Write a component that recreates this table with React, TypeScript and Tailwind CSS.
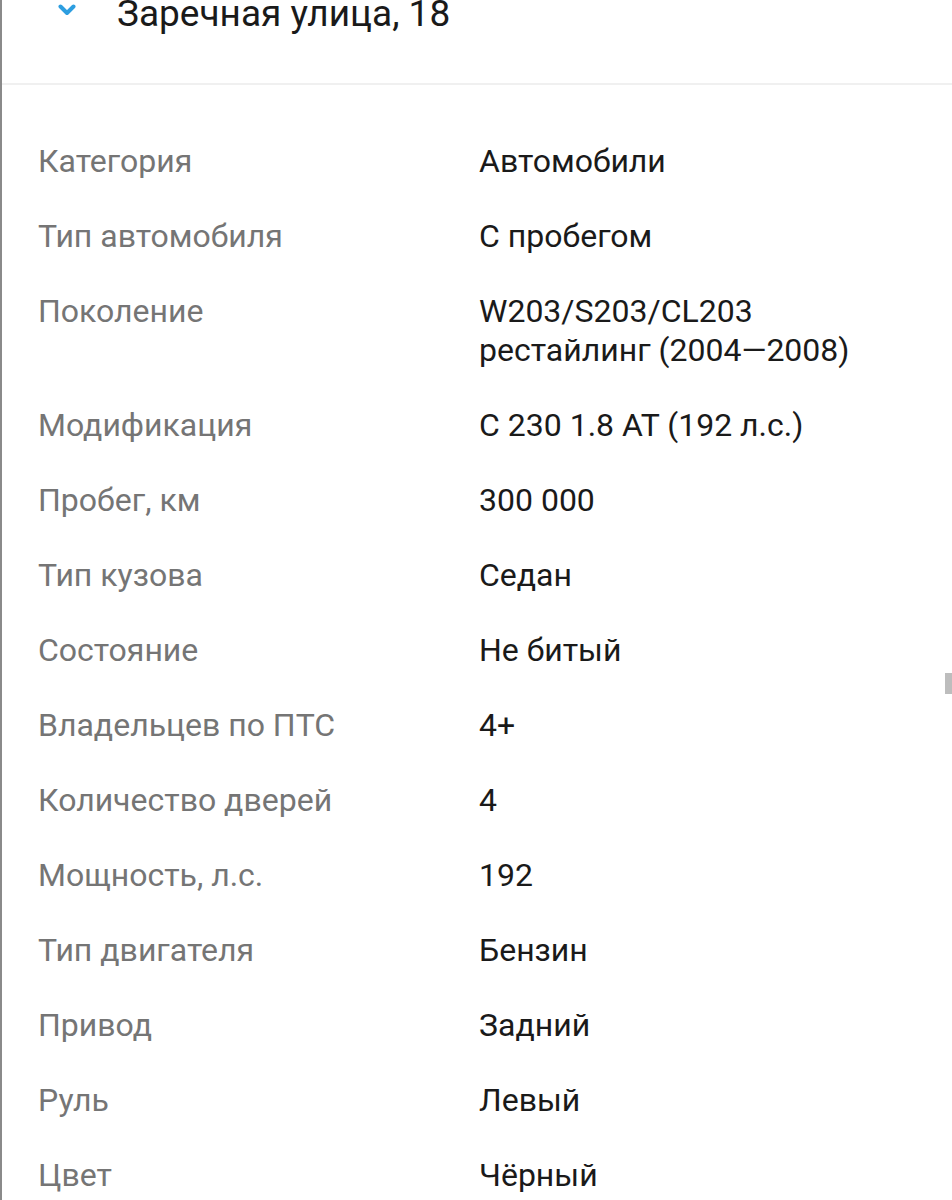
import React from "react";

const rows: [string, string[]][] = [
  ["Категория", ["Автомобили"]],
  ["Тип автомобиля", ["С пробегом"]],
  ["Поколение", ["W203/S203/CL203", "рестайлинг (2004—2008)"]],
  ["Модификация", ["C 230 1.8 AT (192 л.с.)"]],
  ["Пробег, км", ["300 000"]],
  ["Тип кузова", ["Седан"]],
  ["Состояние", ["Не битый"]],
  ["Владельцев по ПТС", ["4+"]],
  ["Количество дверей", ["4"]],
  ["Мощность, л.с.", ["192"]],
  ["Тип двигателя", ["Бензин"]],
  ["Привод", ["Задний"]],
  ["Руль", ["Левый"]],
  ["Цвет", ["Чёрный"]],
];

export default function App() {
  return (
    <div
      className="relative w-[952px] h-[1200px] overflow-hidden bg-white border-l-2 border-[#8a8a8a]"
      style={{ fontFamily: "Roboto, 'Noto Sans', sans-serif" }}
    >
      <div className="h-[85px] flex flex-col border-b-2 border-[#f0f0f0]">
        <div className="flex items-start -mt-[8px]">
          <div className="w-[115px] flex justify-start pl-[56px] pt-[12px]">
            <svg width="18" height="12" viewBox="0 0 18 12">
              <path
                d="M2.5 2.5 L9 9 L15.5 2.5"
                fill="none"
                stroke="#2d9ee0"
                strokeWidth="4"
                strokeLinecap="round"
                strokeLinejoin="round"
              />
            </svg>
          </div>
          <div className="text-[37px] leading-[44px] text-[#1a1a1a]">Заречная улица, 18</div>
        </div>
      </div>
      <div className="grid grid-cols-[441px_1fr] gap-y-[36px] pl-[36px] pt-[57px] text-[32px] leading-[39px]">
        {rows.map(([k, v]) => (
          <React.Fragment key={k}>
            <div className="text-[#757575]">{k}</div>
            <div className="text-[#1a1a1a]">
              {v.map((l) => (
                <div key={l}>{l}</div>
              ))}
            </div>
          </React.Fragment>
        ))}
      </div>
      <div className="absolute right-0 top-[673px] w-[7px] h-[21px] bg-[#bdbdbd]" />
    </div>
  );
}
